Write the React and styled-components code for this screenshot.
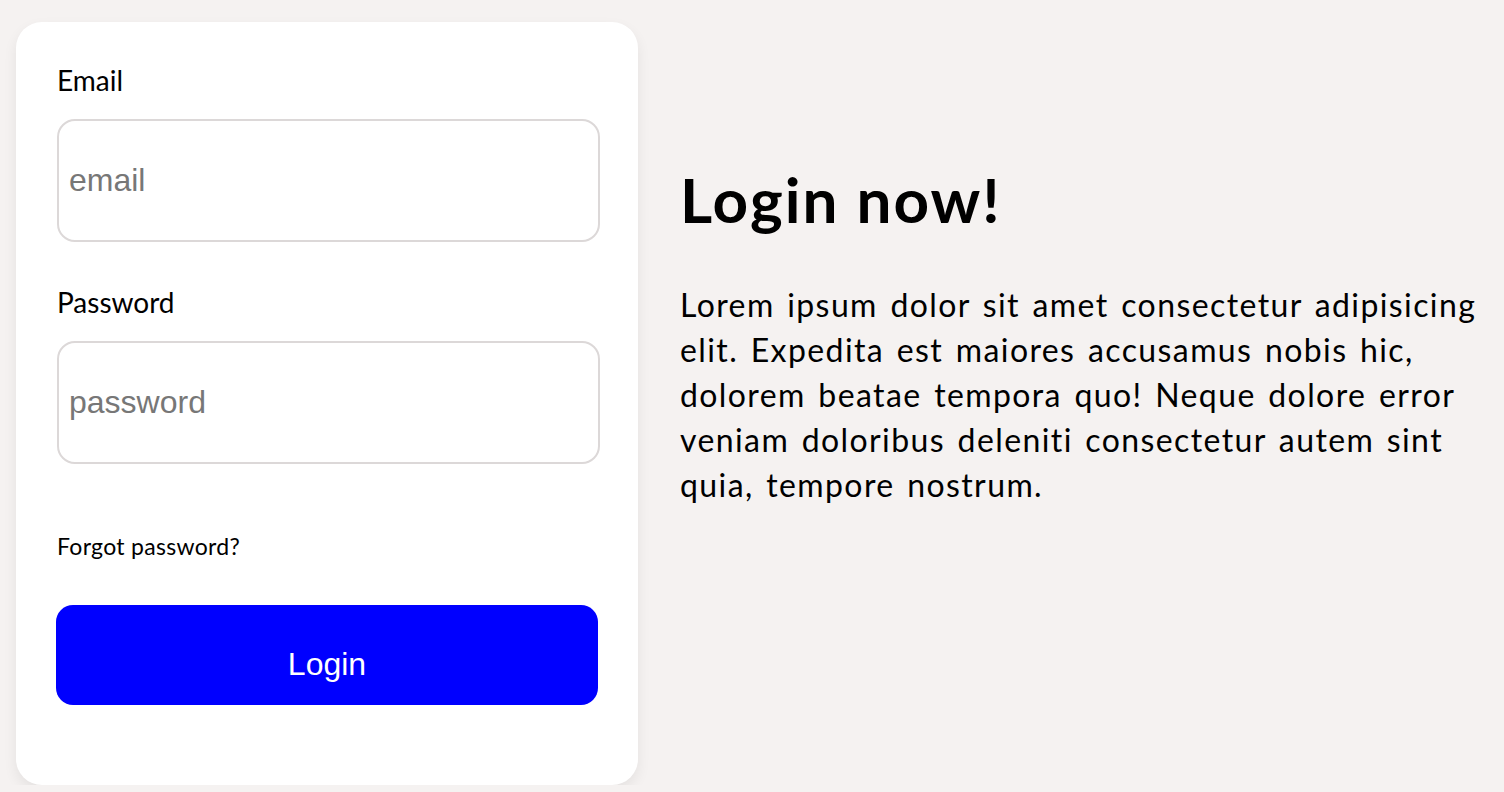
import React from "react";
import styled, { createGlobalStyle } from "styled-components";

const GlobalStyle = createGlobalStyle`
  body {
    margin: 0;
    background: #f5f2f1;
    font-family: Lato, "Open Sans", sans-serif;
    color: #000;
  }
`;

const Page = styled.div`
  display: flex;
  align-items: flex-start;
  gap: 42px;
  padding: 22px 0 0 16px;
`;

const Card = styled.form`
  box-sizing: border-box;
  width: 622px;
  height: 763px;
  flex-shrink: 0;
  background: #fff;
  border-radius: 26px;
  padding: 40px 40px 0 41px;
  box-shadow: 0 6px 14px rgba(0, 0, 0, 0.07);
  display: flex;
  flex-direction: column;
`;

const Label = styled.label`
  font-size: 28px;
  line-height: 36px;
  margin-top: ${(p) => p.$top || 0}px;
`;

const Input = styled.input`
  box-sizing: border-box;
  width: 543px;
  height: 123px;
  margin-top: 21px;
  border: 2px solid #dcd8d8;
  border-radius: 18px;
  padding: 0 10px;
  font-family: "Liberation Sans", Arial, sans-serif;
  font-size: 32px;
  outline: none;
  &::placeholder {
    color: #777;
  }
`;

const Forgot = styled.a`
  font-size: 23px;
  line-height: 28px;
  letter-spacing: 0.3px;
  margin-top: 68px;
  color: #000;
  text-decoration: none;
`;

const Button = styled.button`
  width: 542px;
  height: 100px;
  margin-top: 45px;
  margin-left: -1px;
  padding: 18px 0 0;
  border: none;
  border-radius: 17px;
  background: #0000ff;
  color: #fff;
  font-family: "Liberation Sans", Arial, sans-serif;
  font-size: 32px;
  cursor: pointer;
`;

const Hero = styled.div`
  width: 824px;
  padding-top: 141px;
`;

const Title = styled.h1`
  margin: 0;
  font-size: 62px;
  line-height: 72px;
  letter-spacing: 2px;
  font-weight: 700;
`;

const Text = styled.p`
  margin: 47px 0 0;
  font-size: 32px;
  line-height: 45px;
  letter-spacing: 1.4px;
  word-spacing: 3px;
`;

export default function App() {
  return (
    <>
      <GlobalStyle />
      <Page>
        <Card onSubmit={(e) => e.preventDefault()}>
          <Label>Email</Label>
          <Input type="email" placeholder="email" />
          <Label $top={42}>Password</Label>
          <Input type="password" placeholder="password" />
          <Forgot href="#">Forgot password?</Forgot>
          <Button type="submit">Login</Button>
        </Card>
        <Hero>
          <Title>Login now!</Title>
          <Text>
            Lorem ipsum dolor sit amet consectetur adipisicing elit. Expedita
            est maiores accusamus nobis hic, dolorem beatae tempora quo! Neque
            dolore error veniam doloribus deleniti consectetur autem sint quia,
            tempore nostrum.
          </Text>
        </Hero>
      </Page>
    </>
  );
}
